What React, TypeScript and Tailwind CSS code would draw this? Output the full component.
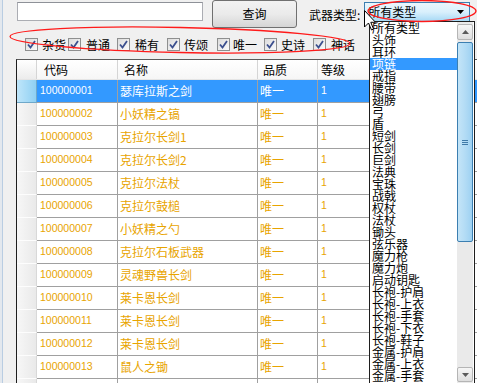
import React from 'react';

const rows = [
  { code: '100000001', name: '瑟库拉斯之剑' },
  { code: '100000002', name: '小妖精之镐' },
  { code: '100000003', name: '克拉尔长剑1' },
  { code: '100000004', name: '克拉尔长剑2' },
  { code: '100000005', name: '克拉尔法杖' },
  { code: '100000006', name: '克拉尔鼓槌' },
  { code: '100000007', name: '小妖精之勺' },
  { code: '100000008', name: '克拉尔石板武器' },
  { code: '100000009', name: '灵魂野兽长剑' },
  { code: '100000010', name: '莱卡恩长剑' },
  { code: '100000011', name: '莱卡恩长剑' },
  { code: '100000012', name: '莱卡恩长剑' },
  { code: '100000013', name: '鼠人之锄' },
];

const types = [
  '所有类型', '头饰', '耳环', '项链', '戒指', '腰带', '翅膀', '弓', '盾', '短剑',
  '长剑', '巨剑', '法典', '宝珠', '战戟', '权杖', '法杖', '锄头', '弦乐器', '魔力枪',
  '魔力炮', '启动钥匙', '长袍-护肩', '长袍-上衣', '长袍-手套', '长袍-下衣', '长袍-鞋子',
  '金属-护肩', '金属-上衣', '金属-手套',
];

// widths/gaps measured per checkbox, WinForms-style manual placement
const checks = [
  { label: '杂货', box: 'w-[43px]', gap: 'ml-[4px]' },
  { label: '普通', box: 'w-[49px]', gap: 'ml-[5px]' },
  { label: '稀有', box: 'w-[50px]', gap: 'ml-[5px]' },
  { label: '传颂', box: 'w-[50px]', gap: 'ml-[4px]' },
  { label: '唯一', box: 'w-[47px]', gap: 'ml-[3px]' },
  { label: '史诗', box: 'w-[49px]', gap: 'ml-[4px]' },
  { label: '神话', box: 'w-[50px]', gap: 'ml-[5px]' },
];

function CheckBox() {
  return (
    <span className="w-[13px] h-[13px] border border-[#8e8f8f] bg-gradient-to-br from-[#dcdcdc] to-[#fbfbfb] flex items-center justify-center">
      <svg width="9" height="9" viewBox="0 0 9 9">
        <path d="M1 4.5 L3.5 7.5 L8 1" fill="none" stroke="#3b4f8e" strokeWidth="1.8" />
      </svg>
    </span>
  );
}

export default function App() {
  const cjk = "font-['SimSun','Noto_Sans_CJK_SC',sans-serif]";
  const num = "font-['Liberation_Sans','Noto_Sans_CJK_SC',sans-serif] text-[10.5px]";

  return (
    <div className={`relative w-[477px] h-[383px] overflow-hidden bg-[#f0f0f0] flex ${cjk} text-[12px] text-black`}>
      <div className="w-[2px] bg-[#e3e8ee]" />
      <div className="w-[1px] bg-[#b9cde2]" />

      <div className="flex-1 flex flex-col">
        {/* top bar */}
        <div className="h-[28px] flex items-start pl-[14px]">
          <div className="mt-[2px] w-[186px] h-[19px] bg-white border border-[#abadb3] border-t-[#8e9198]" />
          <button className="ml-[9px] w-[85px] h-[28px] rounded-[3px] border border-[#707070] bg-gradient-to-b from-[#f2f2f2] via-[#ebebeb] to-[#d5d5d5] flex items-center justify-center text-[12px]">
            查询
          </button>
          <span className="ml-[12px] mt-[8px] leading-[14px]">武器类型:</span>
          <div className="ml-[4px] mt-[2px] w-[106px] h-[20px] border border-[#3c7fb1] bg-gradient-to-b from-[#eaf6fd] via-[#d9f0fc] to-[#a7d9f5] flex items-center justify-between pl-[3px] pr-[5px]">
            <span className="leading-[14px]">所有类型</span>
            <svg width="7" height="4" viewBox="0 0 7 4">
              <path d="M0 0 L7 0 L3.5 4 Z" fill="#000" />
            </svg>
          </div>
        </div>

        {/* checkbox row */}
        <div className="mt-[10px] h-[13px] flex items-center pl-[22px]">
          {checks.map((c) => (
            <div key={c.label} className={`${c.box} flex items-center shrink-0`}>
              <CheckBox />
              <span className={`${c.gap} leading-[13px]`}>{c.label}</span>
            </div>
          ))}
        </div>

        {/* grid */}
        <div className="mt-[8px] ml-[13px] flex-1 border-l border-t border-l-[#1e1e1e] border-t-[#5a5a5a] bg-white flex flex-col">
          <div className="h-[20px] flex shrink-0 border-b border-[#e5e5e5]">
            <div className="w-[20px] bg-gradient-to-b from-[#ffffff] to-[#ececec] border-r border-[#d5d5d5]" />
            <div className="w-[81px] border-r border-[#d5d5d5] pl-[7px] flex items-center bg-gradient-to-b from-white to-[#f6f6f6]">代码</div>
            <div className="w-[140px] border-r border-[#d5d5d5] pl-[6px] flex items-center bg-gradient-to-b from-white to-[#f6f6f6]">名称</div>
            <div className="w-[60px] border-r border-[#d5d5d5] pl-[5px] flex items-center bg-gradient-to-b from-white to-[#f6f6f6]">品质</div>
            <div className="flex-1 pl-[3px] flex items-center bg-gradient-to-b from-white to-[#f6f6f6]">等级</div>
          </div>

          {rows.map((r, i) => {
            const sel = i === 0;
            return (
              <div key={r.code} className={`h-[23px] flex shrink-0 ${sel ? 'bg-[#3399ff] text-white' : 'bg-white text-[#e8a400]'}`}>
                <div
                  className={`w-[20px] border-r border-b ${
                    sel
                      ? 'bg-gradient-to-r from-[#bfe6fa] to-[#8fd0f3] border-[#6fa8c9]'
                      : 'bg-gradient-to-r from-[#f7f7f7] to-[#e9e9e9] border-r-[#d8d8d8] border-b-[#fdfdfd]'
                  }`}
                />
                <div className={`w-[81px] border-r border-b border-[#a0a0a0] pl-[3px] flex items-center ${num}`}>{r.code}</div>
                <div className="w-[140px] border-r border-b border-[#a0a0a0] pl-[2px] flex items-center">{r.name}</div>
                <div className="w-[60px] border-r border-b border-[#a0a0a0] pl-[2px] flex items-center">唯一</div>
                <div className={`flex-1 border-b border-[#a0a0a0] pl-[3px] flex items-center ${num}`}>1</div>
              </div>
            );
          })}
          {/* next row, only its top edge shows */}
          <div className="h-[23px] flex shrink-0 bg-white">
            <div className="w-[20px] bg-gradient-to-r from-[#f7f7f7] to-[#e9e9e9] border-r border-[#d8d8d8]" />
            <div className="w-[81px] border-r border-[#a0a0a0]" />
            <div className="w-[140px] border-r border-[#a0a0a0]" />
            <div className="w-[60px] border-r border-[#a0a0a0]" />
            <div className="flex-1" />
          </div>
        </div>
      </div>

      {/* open dropdown list */}
      <div className="absolute left-[369px] top-[21px] w-[106px] h-[364px] bg-white border border-[#1e1e1e] flex">
        <div className="flex-1 flex flex-col">
          {types.map((t, i) => (
            <div
              key={t}
              className={`h-[12px] leading-[12px] pl-[2px] text-[12px] whitespace-nowrap ${
                i === 3 ? 'bg-[#3399ff] text-white' : 'text-black'
              }`}
            >
              {t}
            </div>
          ))}
        </div>
        <div className="w-[16px] mr-[1px] flex flex-col pt-[2px] bg-[#eaeaea]">
          <div className="h-[16px] rounded-[2px] border border-[#b5b5b5] bg-gradient-to-b from-[#f6f6f6] to-[#dedede] flex items-center justify-center">
            <svg width="7" height="4" viewBox="0 0 7 4">
              <path d="M0 4 L7 4 L3.5 0 Z" fill="#5a5a5a" />
            </svg>
          </div>
          <div className="mt-[2px] h-[200px] rounded-[2px] border border-[#3c7fb1] bg-gradient-to-r from-[#c4e5f8] via-[#b3dcf5] to-[#9dd1f2] flex flex-col items-center justify-center gap-[1px]">
            <div className="w-[6px] h-[1px] bg-[#3f7aa8]" />
            <div className="w-[6px] h-[1px] bg-[#3f7aa8]" />
            <div className="w-[6px] h-[1px] bg-[#3f7aa8]" />
          </div>
          <div className="h-[125px]" />
          <div className="h-[15px] rounded-[2px] border border-[#b5b5b5] bg-gradient-to-b from-[#f6f6f6] to-[#dedede] flex items-center justify-center">
            <svg width="7" height="4" viewBox="0 0 7 4">
              <path d="M0 0 L7 0 L3.5 4 Z" fill="#5a5a5a" />
            </svg>
          </div>
        </div>
      </div>

      {/* red annotation ellipses */}
      <svg className="absolute left-0 top-0 pointer-events-none" width="477" height="383" viewBox="0 0 477 383">
        <ellipse cx="180" cy="40" rx="170" ry="12.5" transform="rotate(1.2 180 40)" fill="none" stroke="#ff1a1a" strokeWidth="1.3" />
        <ellipse cx="422" cy="11" rx="54" ry="10.5" fill="none" stroke="#ff1a1a" strokeWidth="1.3" />
      </svg>

      {/* mouse cursor */}
      <svg className="absolute left-[364px] top-[10px] pointer-events-none" width="13" height="22" viewBox="0 0 13 22">
        <path d="M0.5 0.5 L0.5 17 L4.5 13 L7.5 20 L9.5 19 L6.8 12.3 L11.5 12.3 Z" fill="#fff" stroke="#000" strokeWidth="1" />
      </svg>
    </div>
  );
}
